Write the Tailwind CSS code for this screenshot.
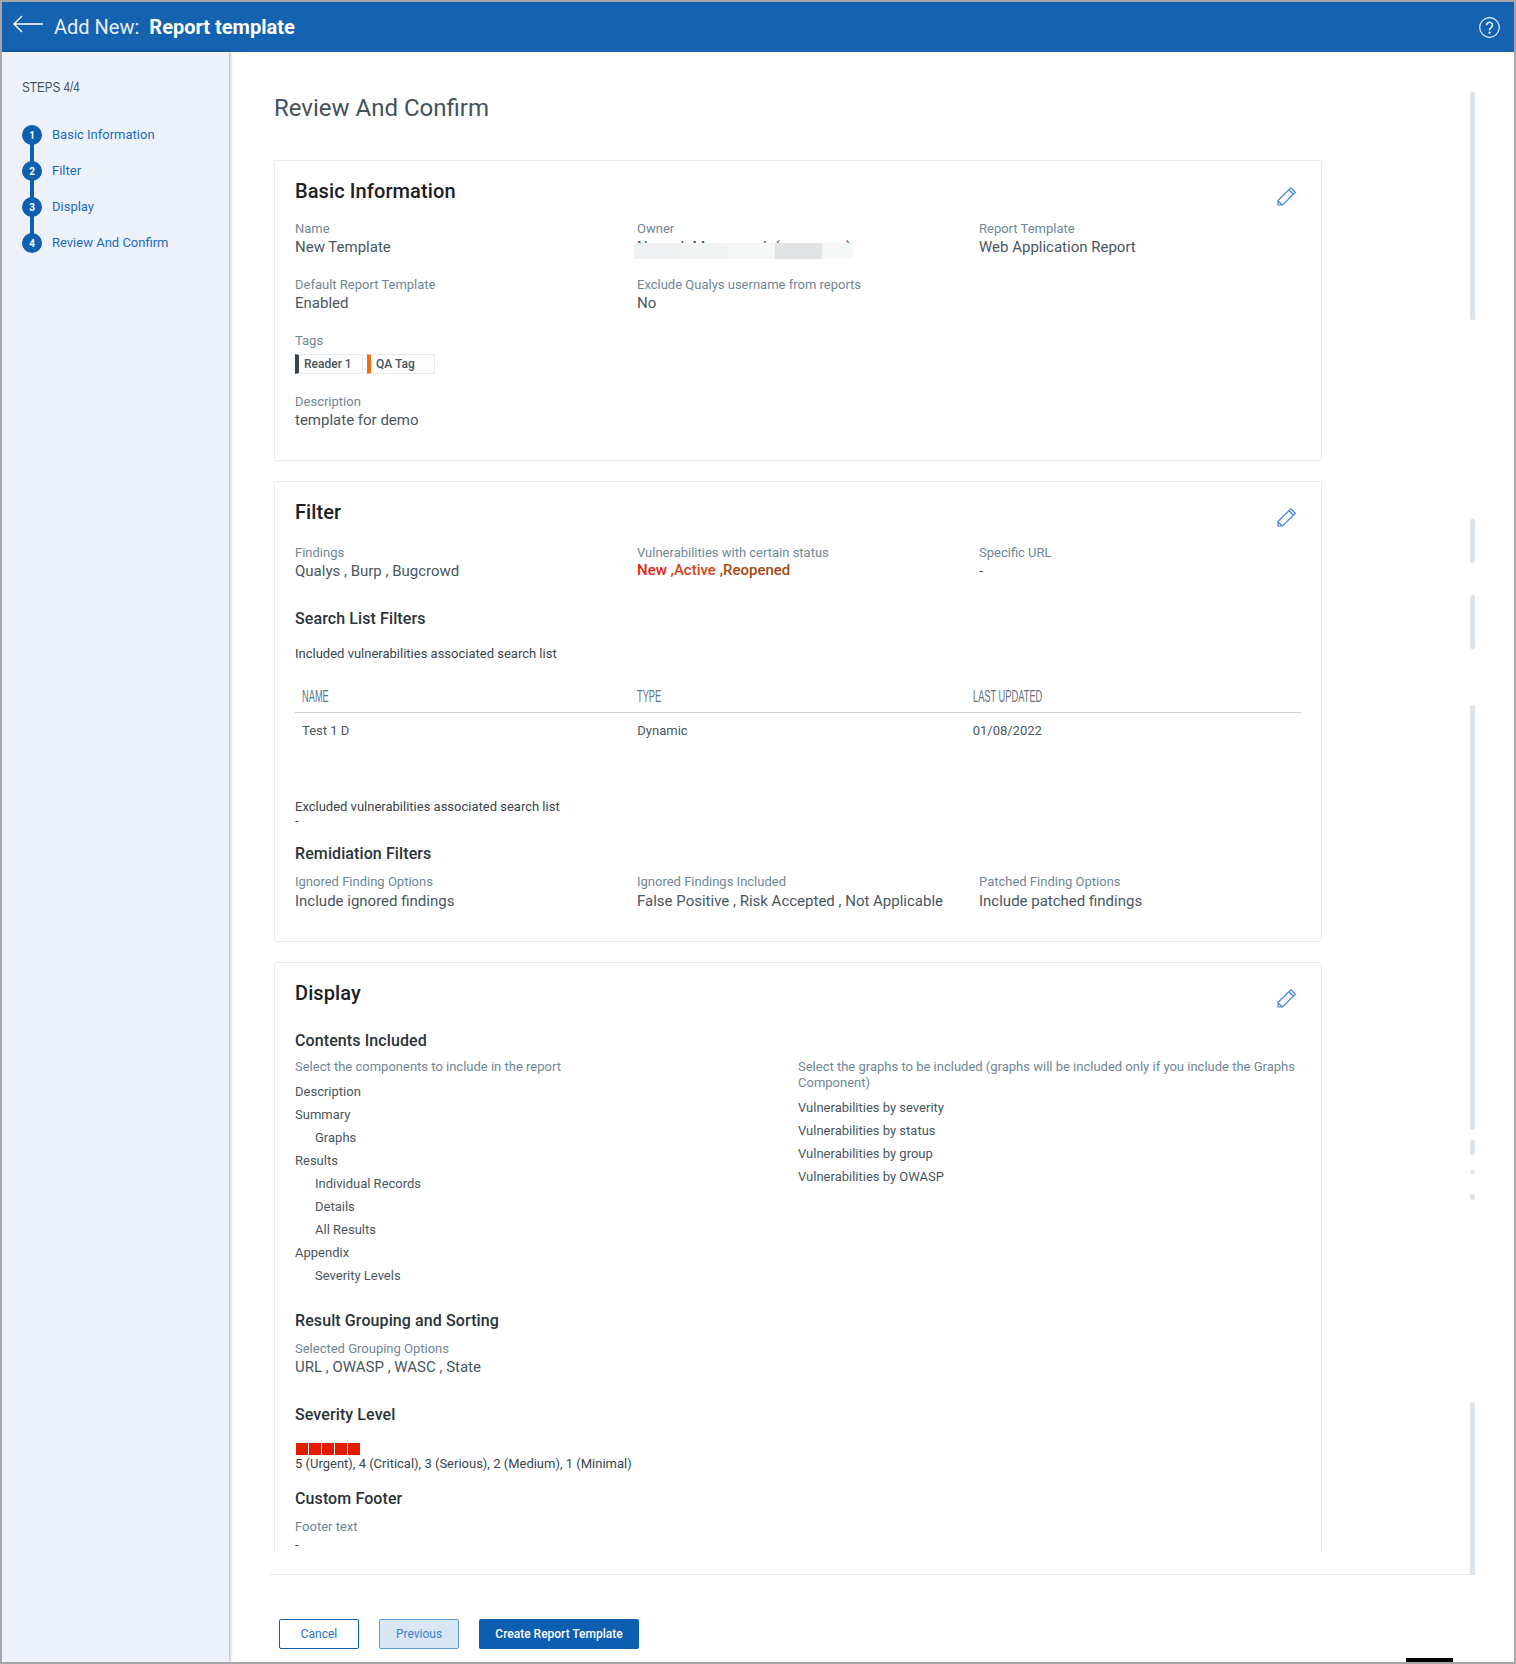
<!DOCTYPE html>
<html lang="en">
<head>
    <meta charset="UTF-8">
    <title>Add New: Report template</title>
    <script src="https://cdn.jsdelivr.net/npm/@tailwindcss/browser@4"></script>
</head>
<body class="font-['Roboto',sans-serif] bg-white">
<div class="w-[1516px] h-[1664px] border-2 border-[#a6a6a6] flex flex-col overflow-hidden">

    <!-- header -->
    <header class="h-[50px] shrink-0 bg-[#1562b0] flex items-center text-white pl-[11px] pr-[14px]">
        <svg width="30" height="18" viewBox="0 0 30 18" fill="none" stroke="#fff" stroke-width="1.4" class="mb-[6px]"><path d="M30 9H1M9 1 1 9l8 8"/></svg>
        <span class="ml-[11px] text-[20px] text-white/90">Add New:</span>
        <span class="ml-[10px] text-[20px] font-bold">Report template</span>
        <svg class="ml-auto" width="21" height="21" viewBox="0 0 21 21" fill="none" stroke="#e6eef8" stroke-width="1.2"><circle cx="10.5" cy="10.5" r="9.8"/><path d="M7.6 8.2a2.9 2.9 0 1 1 4.5 2.4c-1 .7-1.6 1.2-1.6 2.6" stroke-width="1.6"/><circle cx="10.5" cy="15.6" r=".6"/></svg>
    </header>

    <div class="flex flex-1 min-h-0">
        <!-- steps -->
        <aside class="w-[227px] shrink-0 bg-[#edf2fa] shadow-[1px_0_3px_rgba(0,0,0,0.35)] z-10 pl-[20px] pt-[24px]">
            <div class="font-['Liberation_Sans',sans-serif] text-[15px] leading-[22px] text-[#47565f] origin-left scale-x-[.78]">STEPS 4/4</div>
            <ol class="mt-[27px] relative">
                <div class="absolute left-[8px] top-[10px] w-[4px] h-[108px] bg-[#0f5fb0]"></div>
                <li class="relative h-[36px] flex items-start"><span class="w-[20px] h-[20px] rounded-full bg-[#0f5fb0] text-white text-[10px] font-bold flex items-center justify-center">1</span><span class="ml-[10px] text-[13px] leading-[20px] text-[#1c6bbd]">Basic Information</span></li>
                <li class="relative h-[36px] flex items-start"><span class="w-[20px] h-[20px] rounded-full bg-[#0f5fb0] text-white text-[10px] font-bold flex items-center justify-center">2</span><span class="ml-[10px] text-[13px] leading-[20px] text-[#1c6bbd]">Filter</span></li>
                <li class="relative h-[36px] flex items-start"><span class="w-[20px] h-[20px] rounded-full bg-[#0f5fb0] text-white text-[10px] font-bold flex items-center justify-center">3</span><span class="ml-[10px] text-[13px] leading-[20px] text-[#1c6bbd]">Display</span></li>
                <li class="relative h-[36px] flex items-start"><span class="w-[20px] h-[20px] rounded-full bg-[#0f5fb0] text-white text-[10px] font-bold flex items-center justify-center">4</span><span class="ml-[10px] text-[13px] leading-[20px] text-[#1c6bbd]">Review And Confirm</span></li>
            </ol>
        </aside>

        <main class="flex-1 relative flex flex-col min-w-0">
            <!-- scrollbar remains -->
            <div class="absolute left-[1241px] top-[40px] w-[5px] flex flex-col">
                <div class="h-[228px] rounded-[2px] bg-[#dde4e9]"></div>
                <div class="h-[44px] mt-[199px] rounded-[2px] bg-[#dde4e9]"></div>
                <div class="h-[54px] mt-[32px] rounded-[2px] bg-[#dde4e9]"></div>
                <div class="h-[425px] mt-[56px] rounded-[2px] bg-[#dde4e9]"></div>
                <div class="h-[15px] mt-[10px] rounded-[2px] bg-[#dde4e9]"></div>
                <div class="h-[4px] mt-[15px] rounded-[2px] bg-[#dde4e9]"></div>
                <div class="h-[6px] mt-[20px] rounded-[2px] bg-[#dde4e9]"></div>
                <div class="h-[173px] mt-[202px] rounded-[2px] bg-[#dde4e9]"></div>
            </div>

            <div class="h-[1501px] shrink-0 overflow-hidden pl-[45px]">
                <h1 class="mt-[40px] text-[24px] leading-[32px] text-[#44525a]">Review And Confirm</h1>

                <!-- basic information -->
                <section class="mt-[36px] w-[1048px] h-[301px] border border-[#e5ebef] rounded-[2px] pt-[16px] px-[20px] relative">
                    <svg class="absolute right-[24px] top-[25px]" width="20" height="20" viewBox="0 0 20 20" fill="none" stroke="#3f87d6" stroke-width="1.2"><path d="M1 14.5 13.8 1.8l4.6 4.4L5.6 19H1zM11.8 3.8l4.6 4.4M1 15l4.4 4"/></svg>
                    <h2 class="text-[20px] leading-[28px] font-medium tracking-[0.1px] text-[#1b2024]">Basic Information</h2>
                    <div class="grid grid-cols-[342px_342px_1fr] mt-[16px]">
                        <div class="h-[56px]">
                            <div class="text-[13px] leading-[16px] text-[#6f8796]">Name</div>
                            <div class="text-[15px] leading-[20px] text-[#495760]">New Template</div>
                        </div>
                        <div class="h-[56px]">
                            <div class="text-[13px] leading-[16px] text-[#6f8796]">Owner</div>
                            <div class="relative text-[15px] leading-[20px] text-[#495760] whitespace-nowrap">
                                Nnnnnk Mnnnnnnnk (nnnnnnnn)
                                <div class="absolute -left-[3px] top-[6px] w-[219px] h-[16px] flex">
                                    <div class="w-[47px] bg-[#eef0f1]"></div>
                                    <div class="w-[47px] bg-[#f2f4f4]"></div>
                                    <div class="w-[47px] bg-[#f5f6f6]"></div>
                                    <div class="w-[47px] bg-[#e1e2e4]"></div>
                                    <div class="w-[31px] bg-[#f6f7f7]"></div>
                                </div>
                            </div>
                        </div>
                        <div class="h-[56px]">
                            <div class="text-[13px] leading-[16px] text-[#6f8796]">Report Template</div>
                            <div class="text-[15px] leading-[20px] text-[#495760]">Web Application Report</div>
                        </div>
                        <div class="h-[56px]">
                            <div class="text-[13px] leading-[16px] text-[#6f8796]">Default Report Template</div>
                            <div class="text-[15px] leading-[20px] text-[#495760]">Enabled</div>
                        </div>
                        <div class="h-[56px] col-span-2">
                            <div class="text-[13px] leading-[16px] text-[#6f8796]">Exclude Qualys username from reports</div>
                            <div class="text-[15px] leading-[20px] text-[#495760]">No</div>
                        </div>
                    </div>
                    <div class="text-[13px] leading-[16px] text-[#6f8796]">Tags</div>
                    <div class="mt-[5px] flex gap-[4px]">
                        <span class="w-[68px] h-[20px] border border-[#e5ebef] border-l-[4px] border-l-[#36454f] pl-[5px] text-[12px] leading-[18px] font-medium text-[#47555e]">Reader 1</span>
                        <span class="w-[68px] h-[20px] border border-[#e5ebef] border-l-[4px] border-l-[#f56a0f] pl-[5px] text-[12px] leading-[18px] font-medium text-[#47555e]">QA Tag</span>
                    </div>
                    <div class="mt-[20px] text-[13px] leading-[16px] text-[#6f8796]">Description</div>
                    <div class="text-[15px] leading-[20px] text-[#495760]">template for demo</div>
                </section>

                <!-- filter -->
                <section class="mt-[20px] w-[1048px] h-[461px] border border-[#e5ebef] rounded-[2px] pt-[16px] px-[20px] relative">
                    <svg class="absolute right-[24px] top-[25px]" width="20" height="20" viewBox="0 0 20 20" fill="none" stroke="#3f87d6" stroke-width="1.2"><path d="M1 14.5 13.8 1.8l4.6 4.4L5.6 19H1zM11.8 3.8l4.6 4.4M1 15l4.4 4"/></svg>
                    <h2 class="text-[20px] leading-[28px] font-medium tracking-[0.1px] text-[#1b2024]">Filter</h2>
                    <div class="grid grid-cols-[342px_342px_1fr] mt-[19px]">
                        <div>
                            <div class="text-[13px] leading-[16px] text-[#6f8796]">Findings</div>
                            <div class="text-[15px] leading-[20px] text-[#495760]">Qualys , Burp , Bugcrowd</div>
                        </div>
                        <div>
                            <div class="text-[13px] leading-[16px] text-[#6f8796]">Vulnerabilities with certain status</div>
                            <div class="-mt-px text-[15px] leading-[20px] font-medium"><span class="text-[#ee1c0e]">New</span> <span class="text-[#d8420e]">,Active</span> <span class="text-[#a8490f]">,Reopened</span></div>
                        </div>
                        <div>
                            <div class="text-[13px] leading-[16px] text-[#6f8796]">Specific URL</div>
                            <div class="text-[15px] leading-[20px] text-[#495760]">-</div>
                        </div>
                    </div>
                    <h3 class="mt-[27px] text-[16px] leading-[22px] font-medium tracking-[0.1px] text-[#2a3338]">Search List Filters</h3>
                    <p class="mt-[16px] text-[13px] leading-[16px] text-[#3a454c]">Included vulnerabilities associated search list</p>
                    <div class="mt-[23px] grid grid-cols-3 h-[28px] border-b border-[#c9d2d8] font-['Liberation_Sans',sans-serif] text-[16px] leading-[24px] text-[#5f7482] whitespace-nowrap">
                        <div class="pl-[7px]"><span class="inline-block origin-left scale-x-[.58]">NAME</span></div>
                        <div class="pl-[7px]"><span class="inline-block origin-left scale-x-[.58]">TYPE</span></div>
                        <div class="pl-[7px]"><span class="inline-block origin-left scale-x-[.58]">LAST UPDATED</span></div>
                    </div>
                    <div class="mt-[10px] grid grid-cols-3 text-[13px] leading-[16px] text-[#495760]">
                        <div class="pl-[7px]">Test 1 D</div>
                        <div class="pl-[7px]">Dynamic</div>
                        <div class="pl-[7px]">01/08/2022</div>
                    </div>
                    <p class="mt-[60px] text-[13px] leading-[16px] text-[#3a454c]">Excluded vulnerabilities associated search list</p>
                    <p class="text-[13px] leading-[12px] text-[#3a454c]">-</p>
                    <h3 class="mt-[16px] text-[16px] leading-[22px] font-medium tracking-[0.1px] text-[#2a3338]">Remidiation Filters</h3>
                    <div class="grid grid-cols-[342px_342px_1fr] mt-[9px]">
                        <div>
                            <div class="text-[13px] leading-[16px] text-[#6f8796]">Ignored Finding Options</div>
                            <div class="mt-px text-[15px] leading-[20px] text-[#495760]">Include ignored findings</div>
                        </div>
                        <div>
                            <div class="text-[13px] leading-[16px] text-[#6f8796]">Ignored Findings Included</div>
                            <div class="mt-px text-[15px] leading-[20px] text-[#495760]">False Positive , Risk Accepted , Not Applicable</div>
                        </div>
                        <div>
                            <div class="text-[13px] leading-[16px] text-[#6f8796]">Patched Finding Options</div>
                            <div class="mt-px text-[15px] leading-[20px] text-[#495760]">Include patched findings</div>
                        </div>
                    </div>
                </section>

                <!-- display -->
                <section class="mt-[20px] w-[1048px] h-[640px] border border-[#e5ebef] rounded-[2px] pt-[16px] px-[20px] relative">
                    <svg class="absolute right-[24px] top-[25px]" width="20" height="20" viewBox="0 0 20 20" fill="none" stroke="#3f87d6" stroke-width="1.2"><path d="M1 14.5 13.8 1.8l4.6 4.4L5.6 19H1zM11.8 3.8l4.6 4.4M1 15l4.4 4"/></svg>
                    <h2 class="text-[20px] leading-[28px] font-medium tracking-[0.1px] text-[#1b2024]">Display</h2>
                    <h3 class="mt-[23px] text-[16px] leading-[22px] font-medium tracking-[0.1px] text-[#2a3338]">Contents Included</h3>
                    <div class="mt-[7px] grid grid-cols-[503px_1fr] h-[228px]">
                        <div>
                            <div class="text-[13px] leading-[16px] text-[#6f8796]">Select the components to include in the report</div>
                            <ul class="mt-[5px] text-[13px] leading-[23px] text-[#495760]">
                                <li>Description</li>
                                <li>Summary</li>
                                <li class="pl-[20px]">Graphs</li>
                                <li>Results</li>
                                <li class="pl-[20px]">Individual Records</li>
                                <li class="pl-[20px]">Details</li>
                                <li class="pl-[20px]">All Results</li>
                                <li>Appendix</li>
                                <li class="pl-[20px]">Severity Levels</li>
                            </ul>
                        </div>
                        <div>
                            <div class="text-[13px] leading-[16px] text-[#6f8796]">Select the graphs to be included (graphs will be included only if you include the Graphs Component)</div>
                            <ul class="mt-[5px] text-[13px] leading-[23px] text-[#495760]">
                                <li>Vulnerabilities by severity</li>
                                <li>Vulnerabilities by status</li>
                                <li>Vulnerabilities by group</li>
                                <li>Vulnerabilities by OWASP</li>
                            </ul>
                        </div>
                    </div>
                    <h3 class="mt-[23px] text-[16px] leading-[22px] font-medium tracking-[0.1px] text-[#2a3338]">Result Grouping and Sorting</h3>
                    <div class="mt-[9px] text-[13px] leading-[16px] text-[#6f8796]">Selected Grouping Options</div>
                    <div class="text-[15px] leading-[20px] text-[#495760]">URL , OWASP , WASC , State</div>
                    <h3 class="mt-[27px] text-[16px] leading-[22px] font-medium tracking-[0.1px] text-[#2a3338]">Severity Level</h3>
                    <div class="mt-[17px] ml-px flex gap-px">
                        <span class="w-[12px] h-[12px] bg-[#e51c00]"></span>
                        <span class="w-[12px] h-[12px] bg-[#e51c00]"></span>
                        <span class="w-[12px] h-[12px] bg-[#e51c00]"></span>
                        <span class="w-[12px] h-[12px] bg-[#e51c00]"></span>
                        <span class="w-[12px] h-[12px] bg-[#e51c00]"></span>
                    </div>
                    <div class="mt-px text-[13px] leading-[16px] text-[#3a454c]">5 (Urgent), 4 (Critical), 3 (Serious), 2 (Medium), 1 (Minimal)</div>
                    <h3 class="mt-[16px] text-[16px] leading-[22px] font-medium tracking-[0.1px] text-[#2a3338]">Custom Footer</h3>
                    <div class="mt-[9px] text-[13px] leading-[16px] text-[#6f8796]">Footer text</div>
                    <div class="mt-[2px] text-[13px] leading-[16px] text-[#3a454c]">-</div>
                </section>
            </div>

            <!-- footer buttons -->
            <div class="ml-[41px] w-[1205px] mt-[21px] border-t border-[#e5edef] pt-[44px] pl-[9px] flex gap-[20px]">
                <button class="w-[80px] h-[30px] border border-[#0f5fb0] rounded-[2px] bg-white text-[12px] text-[#2a72c0]">Cancel</button>
                <button class="w-[80px] h-[30px] border border-[#5c9bdb] rounded-[2px] bg-[#d9e6f3] text-[12px] text-[#3d82cc]">Previous</button>
                <button class="w-[160px] h-[30px] rounded-[2px] bg-[#0b5eb0] text-[12px] font-medium text-white">Create Report Template</button>
            </div>
            <div class="absolute left-[1177px] bottom-0 w-[47px] h-[4px] bg-black"></div>
        </main>
    </div>
</div>
</body>
</html>
